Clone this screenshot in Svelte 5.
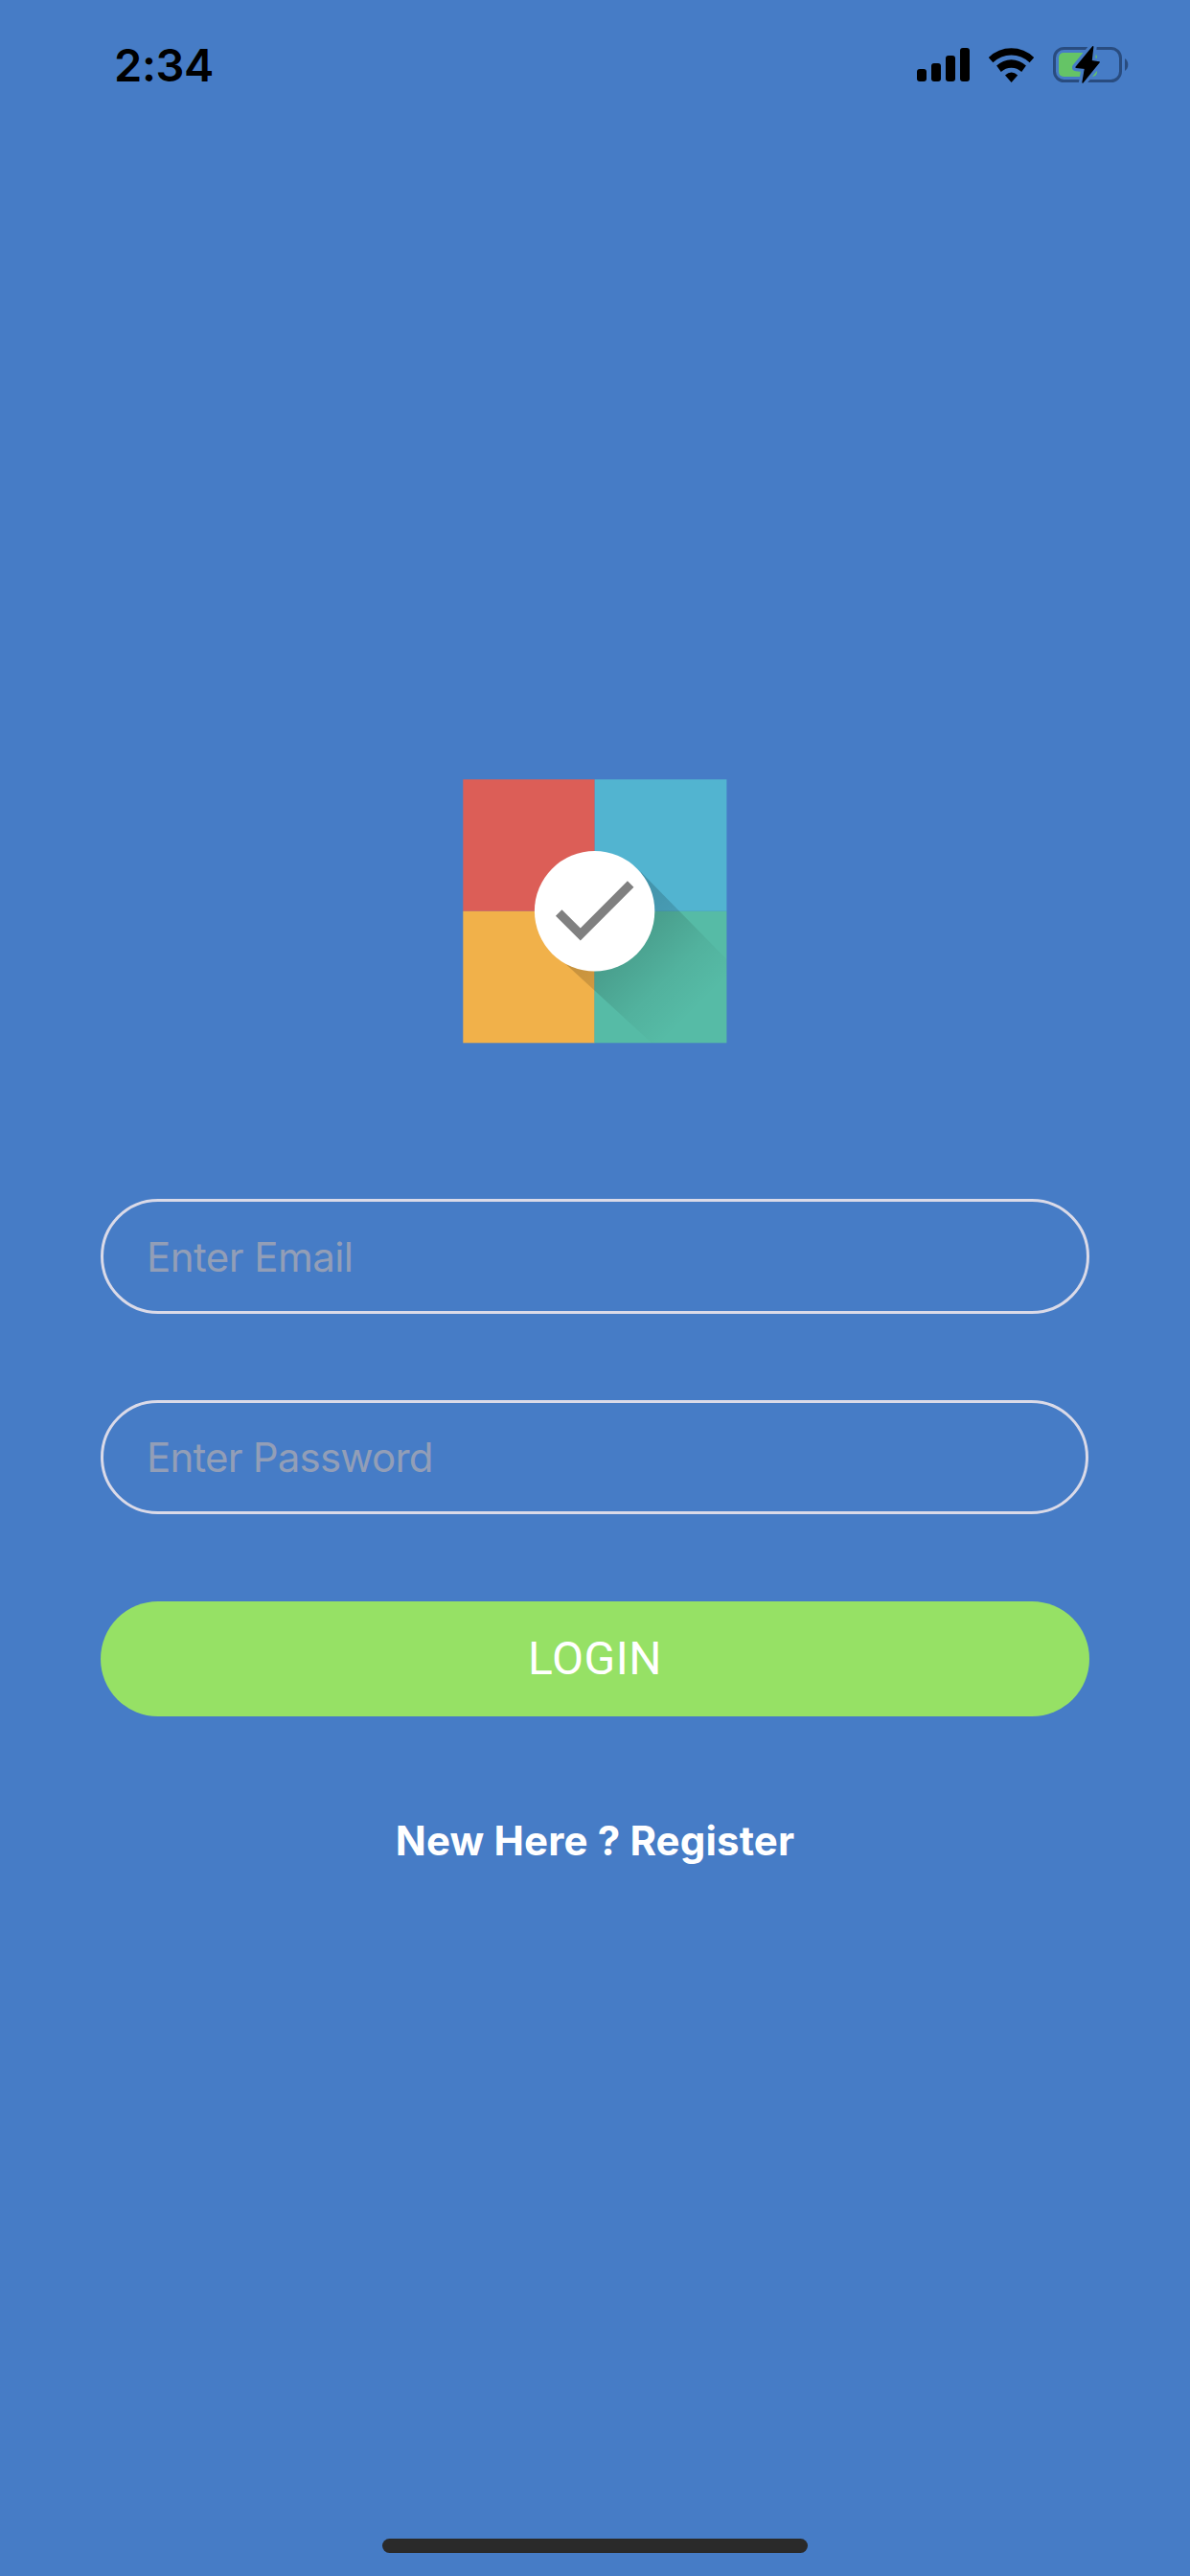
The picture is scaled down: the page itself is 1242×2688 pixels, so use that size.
<script>
  const signalBars = [
    { x: 0, y: 22 },
    { x: 15, y: 16 },
    { x: 30, y: 8 },
    { x: 45, y: 0 },
  ];
  const bolt =
    'M1140.7 48.8L1139 63.6L1147.2 64.9L1130 86L1132.5 71.3L1123 70.2Z';
</script>

<div class="screen">
  <header class="status">
    <span class="time">2:34</span>
    <div class="indicators">
      <svg class="signal" viewBox="0 0 55 35" width="55" height="35">
        {#each signalBars as bar}
          <rect x={bar.x} y={bar.y} width="10" height={35 - bar.y} rx="3" />
        {/each}
      </svg>
      <svg class="wifi" viewBox="1031 48 50 38" width="50" height="38">
        <path d="M1031.8 58.9a34 34 0 0 1 47.4 0l-4.6 5.3a27.3 27.3 0 0 0-38.2 0z" />
        <path d="M1040.1 67.5a22.3 22.3 0 0 1 30.8 0l-4.7 6.4a15.6 15.6 0 0 0-21.4 0z" />
        <path d="M1049 77.4q6.6-5.8 13.2 0l-6.6 7.6z" />
      </svg>
      <svg class="battery" viewBox="1098 46 82 43" width="82" height="43">
        <mask id="bolt-gap" maskUnits="userSpaceOnUse" x="1098" y="46" width="82" height="43">
          <rect x="1098" y="46" width="82" height="43" fill="#fff" />
          <path d={bolt} fill="#000" stroke="#000" stroke-width="8" stroke-linejoin="round" />
        </mask>
        <g mask="url(#bolt-gap)">
          <rect x="1100.5" y="50.5" width="69" height="34" rx="10" fill="none" stroke="#294c7f" stroke-width="3" />
          <rect x="1105" y="55" width="40" height="25" rx="5" fill="#65c466" />
        </g>
        <path d="M1174 61a8 8 0 0 1 0 13z" fill="#294c7f" />
        <path d={bolt} stroke="#000" stroke-width="1.4" stroke-linejoin="round" />
      </svg>
    </div>
  </header>

  <main>
    <svg class="logo" viewBox="0 0 276 276" width="276" height="276">
      <defs>
        <linearGradient id="cast" gradientUnits="userSpaceOnUse" x1="138" y1="138" x2="242" y2="242">
          <stop offset="0" stop-opacity=".2" />
          <stop offset=".35" stop-opacity=".145" />
          <stop offset=".7" stop-opacity=".05" />
          <stop offset="1" stop-opacity="0" />
        </linearGradient>
      </defs>
      <rect x=".3" y=".3" width="137.4" height="137.5" fill="#dc5e57" />
      <rect x="137.7" y=".3" width="137.7" height="137.5" fill="#52b4d0" />
      <rect x=".3" y="137.8" width="137.4" height="137.5" fill="#f1b14a" />
      <rect x="137.4" y="137.8" width="138" height="137.5" fill="#56bba6" />
      <path d="M186 97L275.4 188V275.3H197L101 187Z" fill="url(#cast)" />
      <circle cx="137.6" cy="137.8" r="62.7" fill="#fff" />
      <path d="M100.2 139.5L122.8 162L175.2 109.6" fill="none" stroke="#808080" stroke-width="9.2" />
    </svg>

    <form onsubmit={(event) => event.preventDefault()}>
      <input class="field" type="email" placeholder="Enter Email" aria-label="Email" />
      <input class="field password" type="password" placeholder="Enter Password" aria-label="Password" />
      <button class="login" type="submit">LOGIN</button>
    </form>

    <a class="register" href="#register">New Here ? Register</a>
  </main>

  <div class="home-bar"></div>
</div>

<style>
  :global(body) {
    margin: 0;
    background: #467cc6;
  }
  .screen {
    display: flex;
    flex-direction: column;
    align-items: center;
    box-sizing: border-box;
    width: 1242px;
    height: 2688px;
    padding-bottom: 24px;
    background: #467cc6;
    font-family: Inter, 'Liberation Sans', sans-serif;
    overflow: hidden;
  }
  .status {
    display: flex;
    align-items: center;
    justify-content: space-between;
    box-sizing: border-box;
    width: 100%;
    height: 135px;
    padding: 0 62px 0 119px;
  }
  .time {
    font-size: 47px;
    line-height: 56px;
    font-weight: 600;
    letter-spacing: -0.4px;
    color: #000;
  }
  .indicators {
    display: flex;
    align-items: center;
  }
  .wifi {
    margin: 0 17px 0 19px;
  }
  main {
    flex: 1;
    display: flex;
    flex-direction: column;
    align-items: center;
    width: 100%;
    padding-top: 678px;
  }
  .logo {
    display: block;
  }
  form {
    display: flex;
    flex-direction: column;
    width: 1032px;
    margin-top: 162px;
  }
  .field {
    box-sizing: border-box;
    width: 1032px;
    height: 120px;
    margin: 0 0 90px;
    padding: 0 45px;
    border: 3px solid #dadae8;
    border-radius: 60px;
    background: transparent;
    color: #fff;
    font: 400 42px/51px Inter, 'Liberation Sans', sans-serif;
    letter-spacing: -0.55px;
    outline: none;
  }
  .password {
    width: 1031px;
    height: 119px;
    margin-bottom: 91px;
    letter-spacing: -0.8px;
  }
  .field::placeholder {
    color: #929eb7;
    opacity: 1;
  }
  .login {
    height: 120px;
    padding: 0;
    border: 0;
    border-radius: 60px;
    background: #96e165;
    color: #fff;
    font: 400 48px/58px Roboto, 'Liberation Sans', sans-serif;
    letter-spacing: 0.5px;
  }
  .register {
    margin-top: 104px;
    color: #fff;
    font-size: 42px;
    line-height: 51px;
    font-weight: 700;
    letter-spacing: 0.15px;
    text-decoration: none;
  }
  .home-bar {
    width: 444px;
    height: 15px;
    border-radius: 8px;
    background: #2a2a2a;
  }
</style>
